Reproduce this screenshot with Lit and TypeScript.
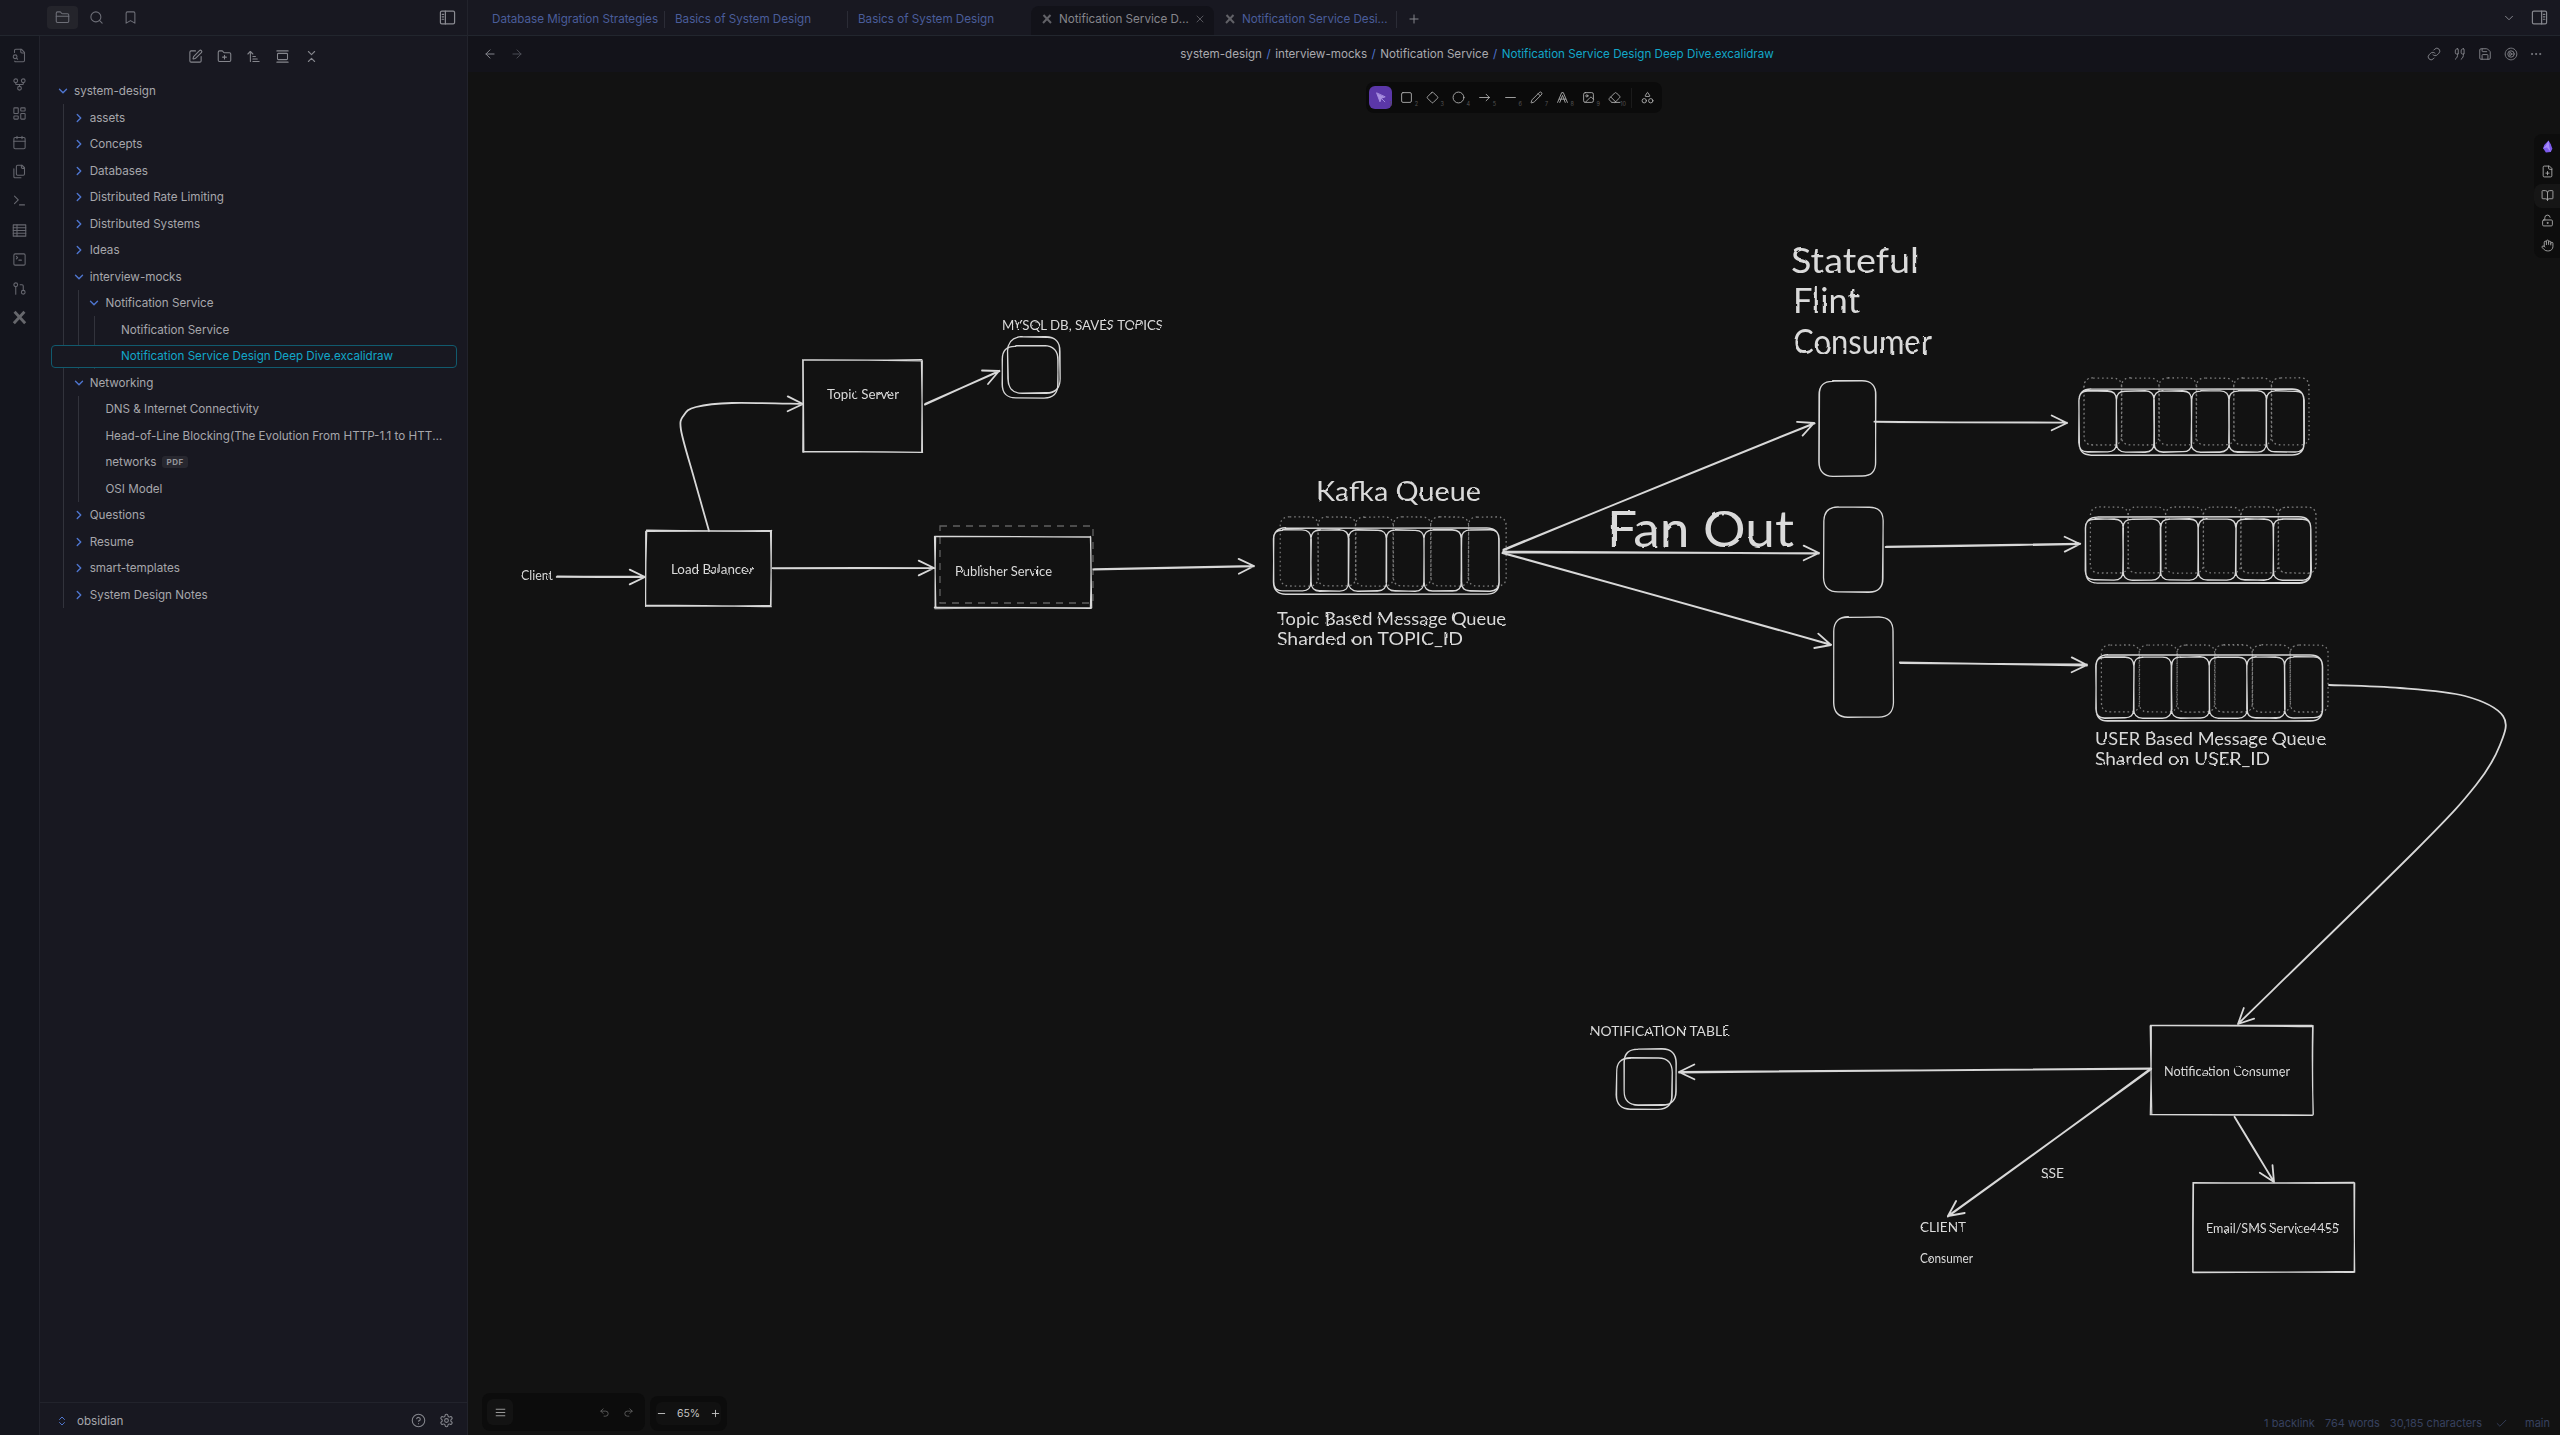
import { LitElement, css, html, svg, nothing } from "lit";
import { customElement } from "lit/decorators.js";

// ---- icons (24x24 stroke glyphs) ----
const FOLDER = "M20 20a2 2 0 0 0 2-2V8a2 2 0 0 0-2-2h-7.9a2 2 0 0 1-1.69-.9L9.6 3.9A2 2 0 0 0 7.93 3H4a2 2 0 0 0-2 2v13a2 2 0 0 0 2 2Z";
const icons: Record<string, unknown> = {
  folder: svg`<path d=${FOLDER}/><path d="M2 10h20"/>`,
  search: svg`<circle cx="11" cy="11" r="8"/><path d="m21 21-4.3-4.3"/>`,
  bookmark: svg`<path d="m19 21-7-4-7 4V5a2 2 0 0 1 2-2h10a2 2 0 0 1 2 2v16z"/>`,
  panelLeft: svg`<rect x="2" y="3" width="20" height="18" rx="2"/><path d="M9 3v18M4.5 7.5h2M4.5 11h2M4.5 14.500h2"/>`,
  panelRight: svg`<rect x="2" y="3" width="20" height="18" rx="2"/><path d="M15 3v18M17.500 7.500h2M17.500 11h2M17.500 14.500h2"/>`,
  fileSearch: svg`<path d="M4.268 21a2 2 0 0 0 1.727 1H18a2 2 0 0 0 2-2V7l-5-5H6a2 2 0 0 0-2 2v3"/><path d="M14 2v4a2 2 0 0 0 2 2h4"/><path d="m9 18-1.500-1.500"/><circle cx="5" cy="14" r="3"/>`,
  graph: svg`<circle cx="12" cy="18" r="3"/><circle cx="6" cy="6" r="3"/><circle cx="18" cy="6" r="3"/><path d="M18 9v2c0 .6-.4 1-1 1H7c-.6 0-1-.4-1-1V9"/><path d="M12 12v3"/>`,
  dashboard: svg`<rect x="3" y="3" width="7" height="9" rx="1"/><rect x="14" y="3" width="7" height="5" rx="1"/><rect x="14" y="12" width="7" height="9" rx="1"/><rect x="3" y="16" width="7" height="5" rx="1"/>`,
  calendar: svg`<path d="M8 2v4M16 2v4"/><rect x="3" y="4" width="18" height="18" rx="2"/><path d="M3 10h18"/>`,
  files: svg`<path d="M20 7h-3a2 2 0 0 1-2-2V2"/><path d="M9 18a2 2 0 0 1-2-2V4a2 2 0 0 1 2-2h7l4 4v10a2 2 0 0 1-2 2Z"/><path d="M3 7.600v12.800A1.600 1.600 0 0 0 4.600 22h9.800"/>`,
  terminal: svg`<path d="m4 17 6-6-6-6"/><path d="M12 19h8"/>`,
  table: svg`<rect x="2" y="3" width="20" height="18"/><path d="M2 7.500h20M2 12h20M2 16.500h20M8 3v18"/>`,
  termBox: svg`<path d="m7 11 2-2-2-2"/><path d="M11 13h4"/><rect x="3" y="3" width="18" height="18" rx="2"/>`,
  git: svg`<circle cx="18" cy="18" r="3"/><circle cx="6" cy="6" r="3"/><path d="M6 21V9"/><path d="M13 6h3a2 2 0 0 1 2 2v7"/>`,
  excalidraw: svg`<path d="M5 4l15 16M19 4 4 20" stroke-width="4" stroke-linecap="butt"/>`,
  edit: svg`<path d="M12 3H5a2 2 0 0 0-2 2v14a2 2 0 0 0 2 2h14a2 2 0 0 0 2-2v-7"/><path d="M18.375 2.625a1 1 0 0 1 3 3l-9.013 9.014a2 2 0 0 1-.853.505l-2.873.84a.5.5 0 0 1-.62-.62l.84-2.873a2 2 0 0 1 .506-.852z"/>`,
  folderPlus: svg`<path d="M12 10v6M9 13h6"/><path d=${FOLDER}/>`,
  sort: svg`<path d="m3 8 4-4 4 4"/><path d="M7 4v16"/><path d="M11 12h4M11 16h7M11 20h10"/>`,
  reveal: svg`<path d="M3 3h18M3 21h18"/><rect x="4" y="7" width="16" height="10" rx="1.500"/>`,
  collapse: svg`<path d="m7 20 5-5 5 5"/><path d="m7 4 5 5 5-5"/>`,
  right: svg`<path d="m9 18 6-6-6-6"/>`,
  down: svg`<path d="m6 9 6 6 6-6"/>`,
  updown: svg`<path d="m7 15 5 5 5-5"/><path d="m7 9 5-5 5 5"/>`,
  help: svg`<circle cx="12" cy="12" r="10"/><path d="M9.090 9a3 3 0 0 1 5.830 1c0 2-3 3-3 3"/><path d="M12 17h.01"/>`,
  gear: svg`<path d="M12.220 2h-.44a2 2 0 0 0-2 2v.18a2 2 0 0 1-1 1.730l-.43.25a2 2 0 0 1-2 0l-.15-.08a2 2 0 0 0-2.730.73l-.22.38a2 2 0 0 0 .73 2.730l.15.1a2 2 0 0 1 1 1.720v.51a2 2 0 0 1-1 1.740l-.15.09a2 2 0 0 0-.73 2.730l.22.38a2 2 0 0 0 2.730.73l.15-.08a2 2 0 0 1 2 0l.43.25a2 2 0 0 1 1 1.730V20a2 2 0 0 0 2 2h.44a2 2 0 0 0 2-2v-.18a2 2 0 0 1 1-1.730l.43-.25a2 2 0 0 1 2 0l.15.08a2 2 0 0 0 2.730-.73l.22-.39a2 2 0 0 0-.73-2.730l-.15-.08a2 2 0 0 1-1-1.740v-.5a2 2 0 0 1 1-1.740l.15-.09a2 2 0 0 0 .73-2.730l-.22-.38a2 2 0 0 0-2.730-.73l-.15.08a2 2 0 0 1-2 0l-.43-.25a2 2 0 0 1-1-1.730V4a2 2 0 0 0-2-2z"/><circle cx="12" cy="12" r="3"/>`,
  close: svg`<path d="M18 6 6 18M6 6l12 12"/>`,
  plus: svg`<path d="M5 12h14M12 5v14"/>`,
  minus: svg`<path d="M5 12h14"/>`,
  back: svg`<path d="m12 19-7-7 7-7"/><path d="M19 12H5"/>`,
  forward: svg`<path d="M5 12h14"/><path d="m12 5 7 7-7 7"/>`,
  link: svg`<path d="M10 13a5 5 0 0 0 7.540.54l3-3a5 5 0 0 0-7.070-7.070l-1.720 1.710"/><path d="M14 11a5 5 0 0 0-7.540-.54l-3 3a5 5 0 0 0 7.070 7.070l1.710-1.710"/>`,
  quote: svg`<path d="M8 3c-3 0-4 1.500-4 4v3c0 1 .5 2 2 2h3V4c0-.6-.4-1-1-1Zm0 9c0 4-1 7-4 9"/><path d="M18 3c-3 0-4 1.500-4 4v3c0 1 .5 2 2 2h3V4c0-.6-.4-1-1-1Zm0 9c0 4-1 7-4 9"/>`,
  save: svg`<path d="M15.200 3a2 2 0 0 1 1.400.6l3.800 3.800a2 2 0 0 1 .6 1.400V19a2 2 0 0 1-2 2H5a2 2 0 0 1-2-2V5a2 2 0 0 1 2-2z"/><path d="M17 21v-7a1 1 0 0 0-1-1H8a1 1 0 0 0-1 1v7"/><path d="M7 3v4a1 1 0 0 0 1 1h7"/>`,
  screencast: svg`<circle cx="12" cy="12" r="10" stroke-dasharray="3 1.500"/><circle cx="12" cy="12" r="5.500"/><path d="m10.500 9.500 4 2.500-4 2.500z"/>`,
  more: svg`<circle cx="5" cy="12" r="1"/><circle cx="12" cy="12" r="1"/><circle cx="19" cy="12" r="1"/>`,
  check: svg`<path d="M20 6 9 17l-5-5"/>`,
  menu: svg`<path d="M4 6h16M4 12h16M4 18h16"/>`,
  undo: svg`<path d="M9 14 4 9l5-5"/><path d="M4 9h10.500a5.500 5.500 0 0 1 0 11H11"/>`,
  redo: svg`<path d="m15 14 5-5-5-5"/><path d="M20 9H9.500a5.500 5.500 0 0 0 0 11H13"/>`,
  pointer: svg`<path d="M5 4l6 16 2.500-6.500L20 11z" fill="currentColor"/><path d="m14 14 6 6"/>`,
  square: svg`<rect x="3" y="3" width="18" height="18" rx="2.500"/>`,
  diamond: svg`<path d="M10.600 2.800 2.800 10.600a2 2 0 0 0 0 2.800l7.800 7.800a2 2 0 0 0 2.800 0l7.800-7.800a2 2 0 0 0 0-2.800l-7.800-7.800a2 2 0 0 0-2.800 0Z"/>`,
  circle: svg`<circle cx="12" cy="12" r="10"/>`,
  arrow: svg`<path d="M3 12h18"/><path d="m15 6 6 6-6 6"/>`,
  line: svg`<path d="M3 12h18"/>`,
  pencil: svg`<path d="M21.170 6.810a1 1 0 0 0-3.990-3.990L3.840 16.170a2 2 0 0 0-.5.83l-1.320 4.350a.5.5 0 0 0 .62.62l4.350-1.320a2 2 0 0 0 .83-.5z"/><path d="m15 5 4 4"/>`,
  letter: svg`<path d="M3 21 10.500 3h3L21 21"/><path d="M7 21 12 8l5 13M6 15h12"/>`,
  image: svg`<rect x="3" y="3" width="18" height="18" rx="3"/><circle cx="9" cy="9" r="2"/><path d="m21 15-3.100-3.100a2 2 0 0 0-2.800 0L6 21"/>`,
  eraser: svg`<path d="m7 21-4.300-4.300c-1-1-1-2.500 0-3.400l9.600-9.600c1-1 2.500-1 3.400 0l5.600 5.600c1 1 1 2.500 0 3.400L13 21"/><path d="M22 21H7"/><path d="m5 11 9 9"/>`,
  shapes: svg`<path d="M8.300 10a.7.700 0 0 1-.6-1l3.700-6a.7.700 0 0 1 1.200 0l3.700 6a.7.700 0 0 1-.6 1z"/><circle cx="6" cy="18" r="4"/><circle cx="18" cy="18" r="4"/>`,
  filePlus: svg`<path d="M15 2H6a2 2 0 0 0-2 2v16a2 2 0 0 0 2 2h12a2 2 0 0 0 2-2V7Z"/><path d="M14 2v4a2 2 0 0 0 2 2h4"/><path d="M9 15h6M12 18v-6"/>`,
  book: svg`<path d="M12 7v14"/><path d="M3 18a1 1 0 0 1-1-1V4a1 1 0 0 1 1-1h5a4 4 0 0 1 4 4 4 4 0 0 1 4-4h5a1 1 0 0 1 1 1v13a1 1 0 0 1-1 1h-6a3 3 0 0 0-3 3 3 3 0 0 0-3-3z"/>`,
  unlock: svg`<rect x="3" y="11" width="18" height="11" rx="2"/><path d="M7 11V7a5 5 0 0 1 9.900-1"/><circle cx="12" cy="16.500" r="1"/>`,
  hand: svg`<path d="M18 11V6a2 2 0 0 0-4 0M14 10V4a2 2 0 0 0-4 0v2M10 10.500V6a2 2 0 0 0-4 0v8"/><path d="M18 8a2 2 0 1 1 4 0v6a8 8 0 0 1-8 8h-2c-2.800 0-4.500-.86-5.990-2.340l-3.600-3.600a2 2 0 0 1 2.830-2.820L7 15"/>`,
  gem: svg`<path d="M14 1 6 9l-2 6 5 8 9-1 3-6-3-8z" fill="#7d5bed" stroke="none"/><path d="M14 1 9 10l-5 5 7-1 7 8-3-10z" fill="#a78bfa" stroke="none"/>`,
};

const icon = (name: string, size = 14, sw = 1.7) => html`<svg
  class="ic" width=${size} height=${size} viewBox="0 0 24 24" fill="none" stroke="currentColor"
  stroke-width=${sw} stroke-linecap="round" stroke-linejoin="round">${icons[name]}</svg>`;

// ---- sketch helpers: hand-drawn strokes with a seeded wobble ----
let seed = 7;
const rnd = () => {
  seed = (seed * 16807) % 2147483647;
  return seed / 2147483647;
};
const j = (a: number) => (rnd() - 0.5) * 2 * a;
const n = (v: number) => v.toFixed(1);

const wobble = (x1: number, y1: number, x2: number, y2: number, a = 0.8) => {
  const mx = (x1 + x2) / 2 + j(a);
  const my = (y1 + y2) / 2 + j(a);
  return `M${n(x1 + j(a))} ${n(y1 + j(a))}Q${n(mx)} ${n(my)} ${n(x2 + j(a))} ${n(y2 + j(a))}`;
};

const roughRect = (x: number, y: number, x2: number, y2: number) => {
  let d = "";
  for (let p = 0; p < 2; p++) {
    d += wobble(x, y, x2, y) + wobble(x2, y, x2, y2) + wobble(x2, y2, x, y2) + wobble(x, y2, x, y);
  }
  return d;
};

const roundRect = (x: number, y: number, x2: number, y2: number, r = 10, a = 0.5) => {
  let d = "";
  for (let p = 0; p < 2; p++) {
    const o = () => j(a);
    d += `M${n(x + r + o())} ${n(y + o())}L${n(x2 - r + o())} ${n(y + o())}Q${n(x2)} ${n(y)} ${n(x2 + o())} ${n(y + r + o())}`;
    d += `L${n(x2 + o())} ${n(y2 - r + o())}Q${n(x2)} ${n(y2)} ${n(x2 - r + o())} ${n(y2 + o())}`;
    d += `L${n(x + r + o())} ${n(y2 + o())}Q${n(x)} ${n(y2)} ${n(x + o())} ${n(y2 - r + o())}`;
    d += `L${n(x + o())} ${n(y + r + o())}Q${n(x)} ${n(y)} ${n(x + r + o())} ${n(y + o())}`;
  }
  return d;
};

type Pt = [number, number];

const spline = (pts: Pt[]) => {
  let d = `M${pts[0][0]} ${pts[0][1]}`;
  for (let i = 0; i < pts.length - 1; i++) {
    const a = pts[Math.max(i - 1, 0)];
    const b = pts[i];
    const c = pts[i + 1];
    const e = pts[Math.min(i + 2, pts.length - 1)];
    d += `C${n(b[0] + (c[0] - a[0]) / 6)} ${n(b[1] + (c[1] - a[1]) / 6)} ${n(c[0] - (e[0] - b[0]) / 6)} ${n(c[1] - (e[1] - b[1]) / 6)} ${c[0]} ${c[1]}`;
  }
  return d;
};

const arrowPath = (pts: Pt[]) => {
  const tip = pts[pts.length - 1];
  const from = pts[pts.length - 2];
  const ang = Math.atan2(tip[1] - from[1], tip[0] - from[0]);
  const wing = (s: number) => {
    const t = ang + s * 0.45;
    return `M${n(tip[0] - 17 * Math.cos(t))} ${n(tip[1] - 17 * Math.sin(t))}L${tip[0]} ${tip[1]}`;
  };
  const body =
    pts.length === 2
      ? wobble(pts[0][0], pts[0][1], tip[0], tip[1], 0.6) + wobble(pts[0][0], pts[0][1], tip[0], tip[1], 0.6)
      : spline(pts);
  return body + wing(1) + wing(-1);
};

const cellEdges = (x: number, x2: number) => Array.from({ length: 7 }, (_, i) => x + ((x2 - x) * i) / 6);

const queuePaths = (x: number, y: number, x2: number, y2: number, ox: number, oy: number, bh: number) => {
  const edges = cellEdges(x, x2);
  let solid = roundRect(x, y, x2, y2, 12, 0.4);
  let dotted = "";
  for (let i = 0; i < 6; i++) {
    solid += roundRect(edges[i], y + 2, edges[i + 1], y2 - 3, 9, 0.4);
    dotted += roundRect(edges[i] + ox, y + oy, edges[i + 1] + ox, y + oy + bh, 9, 0.3);
  }
  return { solid, dotted };
};

const QUEUES = [
  queuePaths(1273.5, 528, 1499, 594, 7, -11, 69),
  queuePaths(2079, 389, 2304, 455, 5, -11, 67),
  queuePaths(2085.5, 517, 2311, 583, 5, -10, 66),
  queuePaths(2096, 655, 2322.5, 721, 5.5, -10, 67),
];

const BOXES = [
  roughRect(646, 531, 771, 606),
  roughRect(803, 360, 922, 452),
  roughRect(935, 537, 1091, 608),
  roughRect(2151, 1026, 2312.5, 1115),
  roughRect(2193, 1183, 2354, 1272),
];

const ROUNDED = [
  roundRect(1008, 337, 1060, 393, 14),
  roundRect(1002, 346, 1058, 398, 14),
  roundRect(1819, 381, 1876, 476, 14),
  roundRect(1824, 507, 1883, 592, 14),
  roundRect(1834, 617, 1893, 717, 14),
  roundRect(1624, 1049, 1676, 1105, 14),
  roundRect(1616.5, 1058, 1672, 1109, 14),
];

const ARROWS: Pt[][] = [
  [[557, 577], [645, 577]],
  [[773, 568], [934, 568]],
  [[1094, 569], [1254, 566]],
  [[925, 404], [999, 371]],
  [[709, 531], [694, 478], [681, 430], [684, 415], [696, 407], [732, 403], [803, 404]],
  [[1503, 550], [1814, 423]],
  [[1503, 552], [1819, 553]],
  [[1503, 553], [1831, 645]],
  [[1875, 422], [2067, 423]],
  [[1886, 547], [2080, 544]],
  [[1900, 663], [2087, 665]],
  [[2329, 685], [2400, 688], [2465, 696], [2503, 716], [2500, 745], [2476, 785], [2416, 850], [2238, 1024]],
  [[2151, 1069], [1679, 1072]],
  [[2151, 1069], [1948, 1216]],
  [[2235, 1117], [2274, 1182]],
];

// text: label, left x, centre y, width, font size
const LABELS: [string, number, number, number, number][] = [
  ["Client", 521, 575, 32, 13],
  ["Load Balancer", 671, 569, 82, 13],
  ["Topic Server", 827, 394, 72, 13],
  ["Publisher Service", 955, 571, 97, 13],
  ["MYSQL DB, SAVES TOPICS", 1002, 325, 161, 12.5],
  ["Kafka Queue", 1316, 490, 165, 27],
  ["Topic Based Message Queue", 1277, 618, 229, 17],
  ["Sharded on TOPIC_ID", 1277, 638, 186, 17],
  ["Fan Out", 1607, 528, 187, 50],
  ["Stateful", 1791, 259, 128, 34],
  ["Flint", 1793, 299, 67, 34],
  ["Consumer", 1793, 340, 139, 34],
  ["USER Based Message Queue", 2095, 738, 231, 17],
  ["Sharded on USER_ID", 2095, 758, 175, 17],
  ["NOTIFICATION TABLE", 1590, 1031, 140, 12.5],
  ["Notification Consumer", 2164, 1071, 126, 13],
  ["SSE", 2041, 1173, 23, 12.5],
  ["CLIENT", 1920, 1227, 46, 12.5],
  ["Consumer", 1920, 1258, 53, 12.5],
  ["Email/SMS Service4455", 2206, 1228, 133, 13],
];

// ---- file tree ----
interface Node {
  name: string;
  open?: boolean;
  folder?: boolean;
  badge?: string;
  selected?: boolean;
  children?: Node[];
}

const closed = (name: string): Node => ({ name, folder: true });
const TREE: Node = {
  name: "system-design",
  folder: true,
  open: true,
  children: [
    closed("assets"),
    closed("Concepts"),
    closed("Databases"),
    closed("Distributed Rate Limiting"),
    closed("Distributed Systems"),
    closed("Ideas"),
    {
      name: "interview-mocks",
      folder: true,
      open: true,
      children: [
        {
          name: "Notification Service",
          folder: true,
          open: true,
          children: [
            { name: "Notification Service" },
            { name: "Notification Service Design Deep Dive.excalidraw", selected: true },
          ],
        },
      ],
    },
    {
      name: "Networking",
      folder: true,
      open: true,
      children: [
        { name: "DNS & Internet Connectivity" },
        { name: "Head-of-Line Blocking(The Evolution From HTTP-1.1 to HTTP-2)" },
        { name: "networks", badge: "PDF" },
        { name: "OSI Model" },
      ],
    },
    closed("Questions"),
    closed("Resume"),
    closed("smart-templates"),
    closed("System Design Notes"),
  ],
};

@customElement("file-tree")
export class FileTree extends LitElement {
  static styles = css`
    :host {
      display: block;
      flex: 1;
      min-height: 0;
      min-width: 0;
      padding: 1.75px 10px 0 11px;
      font: 11.650px Inter, sans-serif;
      color: #a6a6ab;
    }
    .row {
      position: relative;
      height: 26.5px;
      display: flex;
      align-items: center;
      padding-left: 6px;
      gap: 5px;
      white-space: nowrap;
    }
    .chev {
      flex: none;
      width: 12px;
      display: flex;
      justify-content: center;
      color: #4f76d0;
    }
    .name {
      position: relative;
      z-index: 2;
      overflow: hidden;
      text-overflow: ellipsis;
      padding-right: 12px;
    }
    .badge {
      position: relative;
      flex: none;
      margin-left: -11px;
      padding: 0 4px;
      font-size: 8px;
      font-weight: 700;
      line-height: 12px;
      letter-spacing: 0.6px;
      border-radius: 3px;
      background: #27272f;
      color: #94949a;
    }
    .selected {
      color: #12a6c8;
    }
    .selected::before {
      content: "";
      position: absolute;
      z-index: 1;
      left: -47px;
      right: 0;
      top: 1.75px;
      bottom: 1.75px;
      border: 1px solid #115a6e;
      border-radius: 4px;
      background: #181821;
    }
    .group {
      margin-left: 11.500px;
      padding-left: 3.200px;
      border-left: 1px solid #32333c;
    }
    .ic {
      display: block;
      flex: none;
    }
  `;

  node(item: Node): unknown {
    const chev = item.folder ? icon(item.open ? "down" : "right", 14, 2.4) : nothing;
    return html`
      <div class="row ${item.selected ? "selected" : ""}">
        <span class="chev">${chev}</span>
        <span class="name">${item.name}</span>
        ${item.badge ? html`<span class="badge">${item.badge}</span>` : nothing}
      </div>
      ${item.children ? html`<div class="group">${item.children.map((c) => this.node(c))}</div>` : nothing}
    `;
  }

  render() {
    return this.node(TREE);
  }
}

// ---- the free-form drawing ----
@customElement("sketch-board")
export class SketchBoard extends LitElement {
  static styles = css`
    :host {
      position: absolute;
      inset: 0;
      display: block;
    }
    svg {
      display: block;
      width: 100%;
      height: 100%;
    }
    .ink {
      fill: none;
      stroke: #d8d8d8;
      stroke-width: 1.200;
      stroke-linecap: round;
      stroke-linejoin: round;
    }
    .ink.heavy {
      stroke-width: 1.800;
    }
    .dots {
      fill: none;
      stroke: #7a7a7a;
      stroke-width: 1.200;
      stroke-dasharray: 1.500 3;
    }
    .dash {
      fill: none;
      stroke: #606060;
      stroke-width: 1.300;
      stroke-dasharray: 7 6;
    }
    text {
      font-family: Lato, sans-serif;
      fill: #dadada;
      dominant-baseline: central;
    }
  `;

  render() {
    return html`<svg viewBox="468 72 2092 1363" preserveAspectRatio="xMinYMin meet">
      <defs>
        <filter id="hand" x="-5%" y="-5%" width="110%" height="110%">
          <feTurbulence type="fractalNoise" baseFrequency="0.09" numOctaves="2" seed="4" />
          <feDisplacementMap in="SourceGraphic" scale="2.400" />
        </filter>
      </defs>
      <rect class="dash" x="940" y="526" width="153" height="77" />
      ${QUEUES.map((q) => svg`<path class="dots" d=${q.dotted} />`)}
      ${BOXES.map((d) => svg`<path class="ink" d=${d} />`)}
      ${ROUNDED.map((d) => svg`<path class="ink" d=${d} />`)}
      ${QUEUES.map((q) => svg`<path class="ink" d=${q.solid} />`)}
      ${ARROWS.map((a) => svg`<path class="ink heavy" d=${arrowPath(a)} />`)}
      <g filter="url(#hand)">
        ${LABELS.map(
          ([t, x, y, w, size]) => svg`<text x=${x} y=${y} font-size=${size} textLength=${w} lengthAdjust="spacingAndGlyphs">${t}</text>`
        )}
      </g>
    </svg>`;
  }
}

const RIBBON = ["fileSearch", "graph", "dashboard", "calendar", "files", "terminal", "table", "termBox", "git"];
const TOOLS = ["square", "diamond", "circle", "arrow", "line", "pencil", "letter", "image", "eraser"];
const TABS = [
  { title: "Database Migration Strategies" },
  { title: "Basics of System Design" },
  { title: "Basics of System Design" },
  { title: "Notification Service Design Deep Dive", excal: true, active: true },
  { title: "Notification Service Design Deep Dive", excal: true },
];

@customElement("app-root")
export class AppRoot extends LitElement {
  static styles = css`
    :host {
      display: grid;
      grid-template-columns: 468px minmax(0, 1fr);
      width: 2560px;
      height: 1435px;
      overflow: hidden;
      background: #121212;
      font: 11.650px Inter, sans-serif;
      color: #a6a6ab;
    }
    .ic {
      display: block;
      flex: none;
    }
    /* left column */
    .left {
      display: grid;
      grid-template-rows: 36px minmax(0, 1fr);
      grid-template-columns: 40px minmax(0, 1fr);
      min-height: 0;
      min-width: 0;
      background: #181821;
      border-right: 1px solid #22232c;
    }
    .left-top {
      grid-column: 1 / 3;
      display: flex;
      align-items: center;
      padding-left: 47px;
      border-bottom: 1px solid #22262e;
      color: #6e6f78;
    }
    .tab-btn {
      width: 31px;
      height: 23px;
      display: flex;
      align-items: center;
      justify-content: center;
      border-radius: 4px;
      margin-right: 3px;
    }
    .tab-btn.on {
      background: #24242b;
    }
    .left-top .toggle {
      margin-left: auto;
      margin-right: 11px;
      color: #8a8b92;
    }
    .ribbon {
      display: flex;
      flex-direction: column;
      align-items: center;
      gap: 14.200px;
      padding-top: 11.500px;
      background: #14151d;
      border-right: 1px solid #22232c;
      color: #66676f;
    }
    .ribbon .xl {
      color: #66676c;
      margin-top: -1px;
    }
    .side {
      display: flex;
      flex-direction: column;
      min-height: 0;
      min-width: 0;
    }
    .nav {
      flex: none;
      height: 40px;
      display: flex;
      align-items: center;
      justify-content: center;
      gap: 14px;
      color: #85868d;
    }
    .vault {
      flex: none;
      height: 33px;
      padding: 3px 13px 0 16px;
      box-sizing: border-box;
      display: flex;
      align-items: center;
      gap: 9px;
      border-top: 1px solid #22232c;
    }
    .vault .ud {
      color: #4f76d0;
    }
    .vault .acts {
      margin-left: auto;
      display: flex;
      gap: 13px;
      color: #85868d;
    }
    /* right column */
    .main {
      display: flex;
      flex-direction: column;
      min-width: 0;
      min-height: 0;
    }
    .tabs {
      flex: none;
      height: 36px;
      box-sizing: border-box;
      padding: 6px 0 0 14px;
      display: flex;
      align-items: stretch;
      background: #181821;
      border-bottom: 1px solid #22262e;
    }
    .tab {
      position: relative;
      flex: none;
      width: 183px;
      box-sizing: border-box;
      padding: 0 6px 3px 10px;
      display: flex;
      align-items: center;
      gap: 6px;
      color: #4a5d9a;
      white-space: nowrap;
      border-radius: 8px 8px 0 0;
    }
    .tab::after {
      content: "";
      position: absolute;
      right: 0;
      top: 5px;
      height: 17px;
      width: 1px;
      background: #2b2c36;
    }
    .tab.active {
      background: #121219;
      color: #85858b;
      padding-right: 8px;
      gap: 3px;
    }
    .tab.active .mark {
      margin-right: 3px;
    }
    .tab.active::after,
    .tab.before-active::after {
      display: none;
    }
    .tab .t {
      flex: 1;
      min-width: 0;
      overflow: hidden;
      text-overflow: ellipsis;
    }
    .tab .mark,
    .tab .xc {
      color: #616167;
    }
    .new {
      display: flex;
      align-items: center;
      padding: 0 0 3px 10px;
      color: #85868d;
    }
    .win {
      margin-left: auto;
      display: flex;
      align-items: center;
      gap: 14.500px;
      padding: 0 12.500px 6px 0;
      color: #85868d;
    }
    .head {
      flex: none;
      height: 36px;
      display: grid;
      grid-template-columns: 1fr auto 1fr;
      align-items: center;
      padding: 0 17px 0 15px;
      background: #13131a;
    }
    .arrows {
      display: flex;
      gap: 13px;
      color: #85868d;
    }
    .arrows .off {
      color: #4c4d55;
    }
    .crumbs {
      display: flex;
      gap: 4.500px;
      margin-right: 72px;
      color: #a9a9ae;
      white-space: nowrap;
    }
    .crumbs i {
      font-style: normal;
      color: #4f76d0;
    }
    .crumbs .cur {
      color: #12a6c8;
    }
    .actions {
      justify-self: end;
      display: flex;
      gap: 11.500px;
      color: #7d7e85;
    }
    .canvas {
      position: relative;
      flex: 1;
      min-height: 0;
      background: #121212;
    }
    /* overlays on the drawing */
    .toolbar {
      position: absolute;
      top: 10px;
      left: 50%;
      transform: translateX(-50%);
      display: flex;
      align-items: center;
      gap: 3px;
      padding: 4px 3px;
      border-radius: 8px;
      background: #0b0b0b;
    }
    .tool {
      position: relative;
      width: 23px;
      height: 23px;
      display: flex;
      align-items: center;
      justify-content: center;
      border-radius: 6px;
      color: #b5b5b5;
    }
    .tool.on {
      background: #5b37a8;
      color: #a88fe0;
    }
    .tool sub {
      position: absolute;
      right: 0;
      bottom: 2px;
      font-size: 5.500px;
      line-height: 6px;
      color: #555;
    }
    .sep {
      width: 1px;
      height: 20px;
      margin: 0 1.500px;
      background: #1b1b1b;
    }
    .rail {
      position: absolute;
      top: 62px;
      right: 0;
      width: 26px;
      display: flex;
      flex-direction: column;
      border-radius: 8px 0 0 8px;
      background: #0d0d0d;
      color: #a8a8a8;
    }
    .rail div {
      height: 24.800px;
      display: flex;
      align-items: center;
      justify-content: center;
      border-radius: 8px 0 0 8px;
    }
    .rail .on {
      background: #161616;
    }
    .bottom {
      position: absolute;
      left: 14px;
      bottom: 4px;
      display: flex;
      align-items: flex-end;
      gap: 5px;
    }
    .panel {
      display: flex;
      align-items: center;
      border-radius: 8px;
      background: #0c0c0c;
      color: #8d8d8d;
    }
    .p1 {
      width: 163px;
      height: 38px;
      box-sizing: border-box;
      padding: 0 11px 0 5px;
    }
    .menu {
      width: 26px;
      height: 26px;
      display: flex;
      align-items: center;
      justify-content: center;
      border-radius: 6px;
      background: #131313;
      color: #a5a5a5;
    }
    .p1 .hist {
      margin-left: auto;
      display: flex;
      gap: 13px;
      color: #6a6a6a;
    }
    .p2 {
      width: 77px;
      height: 35px;
      box-sizing: border-box;
      padding: 0 6px;
    }
    .zoom {
      flex: 1;
      height: 23px;
      display: flex;
      align-items: center;
      justify-content: space-between;
      border-radius: 6px;
      background: #111;
      color: #c4c4c4;
      font-size: 10.500px;
    }
    .status {
      position: absolute;
      right: 10px;
      bottom: 0;
      height: 24px;
      display: flex;
      align-items: center;
      gap: 10px;
      color: #37415f;
      font-size: 11px;
      white-space: nowrap;
    }
    .status .tick {
      margin: 0 7px 0 3px;
    }
  `;

  render() {
    return html`
      <div class="left">
        <div class="left-top">
          <span class="tab-btn on">${icon("folder", 15)}</span>
          <span class="tab-btn">${icon("search", 15)}</span>
          <span class="tab-btn">${icon("bookmark", 15)}</span>
          <span class="toggle">${icon("panelLeft", 17)}</span>
        </div>
        <div class="ribbon">
          ${RIBBON.map((r) => icon(r, 15))}
          <span class="xl">${icon("excalidraw", 17)}</span>
        </div>
        <div class="side">
          <div class="nav">
            ${["edit", "folderPlus", "sort", "reveal", "collapse"].map((n) => icon(n, 15))}
          </div>
          <file-tree></file-tree>
          <div class="vault">
            <span class="ud">${icon("updown", 12, 2)}</span>
            <span>obsidian</span>
            <span class="acts">${icon("help", 15)}${icon("gear", 15)}</span>
          </div>
        </div>
      </div>
      <div class="main">
        <div class="tabs">
          ${TABS.map(
            (t, i) => html`<div class="tab ${t.active ? "active" : ""} ${TABS[i + 1]?.active ? "before-active" : ""}">
              ${t.excal ? html`<span class="mark">${icon("excalidraw", 12)}</span>` : nothing}
              <span class="t">${t.title}</span>
              ${t.active ? html`<span class="xc">${icon("close", 12)}</span>` : nothing}
            </div>`
          )}
          <span class="new">${icon("plus", 14)}</span>
          <span class="win">${icon("down", 14)}${icon("panelRight", 17)}</span>
        </div>
        <div class="head">
          <div class="arrows">${icon("back")}<span class="off">${icon("forward")}</span></div>
          <div class="crumbs">
            <span>system-design</span><i>/</i><span>interview-mocks</span><i>/</i><span>Notification Service</span><i>/</i>
            <span class="cur">Notification Service Design Deep Dive.excalidraw</span>
          </div>
          <div class="actions">
            ${["link", "quote", "save", "screencast", "more"].map((n) => icon(n))}
          </div>
        </div>
        <div class="canvas">
          <sketch-board></sketch-board>
          <div class="toolbar">
            <span class="tool on">${icon("pointer", 13)}<sub>1</sub></span>
            ${TOOLS.map((t, i) => html`<span class="tool">${icon(t, 13, 1.6)}<sub>${i + 2}</sub></span>`)}
            <span class="sep"></span>
            <span class="tool">${icon("shapes", 13, 1.6)}</span>
          </div>
          <div class="rail">
            <div>${icon("gem", 13)}</div>
            <div>${icon("filePlus", 13)}</div>
            <div class="on">${icon("book", 13)}</div>
            <div>${icon("unlock", 13)}</div>
            <div>${icon("hand", 13)}</div>
          </div>
          <div class="bottom">
            <div class="panel p1">
              <span class="menu">${icon("menu", 13)}</span>
              <span class="hist">${icon("undo", 11)}${icon("redo", 11)}</span>
            </div>
            <div class="panel p2">
              <div class="zoom">${icon("minus", 11, 2)}<span>65%</span>${icon("plus", 11, 2)}</div>
            </div>
          </div>
          <div class="status">
            <span>1 backlink</span><span>764 words</span><span>30,185 characters</span>
            <span class="tick">${icon("check", 13, 1.6)}</span><span>main</span>
          </div>
        </div>
      </div>
    `;
  }
}
